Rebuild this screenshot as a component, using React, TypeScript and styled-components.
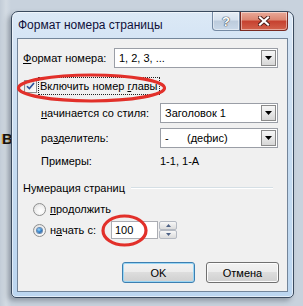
import React from 'react';
import styled, { createGlobalStyle } from 'styled-components';

const Global = createGlobalStyle`
  html, body { margin: 0; padding: 0; }
  body {
    width: 303px;
    height: 306px;
    overflow: hidden;
    background: #c8d2dd;
    font-family: "Liberation Sans", Arial, sans-serif;
  }
`;

const Page = styled.div`
  position: relative;
  width: 303px;
  height: 306px;
  box-sizing: border-box;
  padding: 11px 9px 8px 11px;
  background: linear-gradient(90deg, #c2ccd7 0px, #d3dbe3 6px, #c8d2dd 11px, #c8d2dd 100%);
`;

const BackLetter = styled.span`
  position: absolute;
  left: 2px;
  top: 130px;
  font: bold 15px "Liberation Sans", Arial, sans-serif;
  color: #111;
  text-shadow: -1px 0 0 #d9a640;
`;

const Window = styled.div`
  position: relative;
  width: 283px;
  height: 287px;
  box-sizing: border-box;
  border: 1px solid #3a4a5e;
  border-radius: 7px 7px 5px 5px;
  background: linear-gradient(180deg, #dce9f6 0%, #d3e3f4 12%, #c4dbf1 60%, #bcd6f0 100%);
  box-shadow: inset 0 0 0 1px rgba(255, 255, 255, 0.55), -3px 3px 5px rgba(40, 50, 60, 0.35);
  display: flex;
  flex-direction: column;
`;

const TitleBar = styled.div`
  height: 26px;
  display: flex;
  align-items: center;
  padding-left: 6px;
  font-size: 12px;
  color: #10103a;
`;

const CaptionButtons = styled.div`
  position: absolute;
  top: 0;
  right: 5px;
  display: flex;
`;

const CapButton = styled.div<{ $variant: 'help' | 'close' }>`
  box-sizing: border-box;
  height: 19px;
  width: ${(p) => (p.$variant === 'help' ? '28px' : '48px')};
  display: flex;
  align-items: center;
  justify-content: center;
  border: 1px solid ${(p) => (p.$variant === 'help' ? '#7489a3' : '#7a2a22')};
  border-top: none;
  border-radius: ${(p) => (p.$variant === 'help' ? '0 0 0 4px' : '0 0 4px 0')};
  background: ${(p) =>
    p.$variant === 'help'
      ? 'linear-gradient(180deg, #e6edf5 0%, #d6e1ee 45%, #bccbdc 50%, #c9d8e8 100%)'
      : 'linear-gradient(180deg, #e9a998 0%, #dc8671 45%, #c6402f 50%, #d2624c 100%)'};
  box-shadow: inset 0 0 0 1px rgba(255, 255, 255, 0.45);
`;

const HelpGlyph = styled.span`
  font: bold 13px "Liberation Sans", Arial, sans-serif;
  color: #ffffff;
  text-shadow: 0 0 1px #3c4858, 0 0 1px #3c4858, 0 0 1px #3c4858;
  line-height: 1;
`;

const Client = styled.div`
  margin: 0 5px 5px;
  height: 254px;
  box-sizing: border-box;
  border: 1px solid #73859a;
  background: #f0f0f0;
  display: flex;
  flex-direction: column;
  padding: 9px 9px 8px 5px;
  font-size: 11px;
  color: #000;
`;

const FieldRow = styled.div<{ $indent?: boolean; $top: number }>`
  display: grid;
  grid-template-columns: ${(p) => (p.$indent ? '119px 118px' : '91px 164px')};
  align-items: center;
  padding-left: ${(p) => (p.$indent ? '18px' : '0')};
  margin-top: ${(p) => p.$top}px;
  height: ${(p) => (p.$indent ? '20px' : '20px')};
`;

const TextRow = styled.div<{ $top: number }>`
  display: grid;
  grid-template-columns: 119px auto;
  align-items: center;
  padding-left: 18px;
  margin-top: ${(p) => p.$top}px;
  height: 16px;
`;

const Label = styled.span`
  white-space: nowrap;
`;

const U = styled.span`
  text-decoration: underline;
  text-underline-offset: 1px;
`;

const Combo = styled.div`
  box-sizing: border-box;
  height: 20px;
  border: 1px solid #9a9ea6;
  background: #fff;
  display: flex;
  align-items: stretch;
  padding: 1px;
`;

const ComboText = styled.span<{ $gap?: boolean }>`
  flex: 1;
  display: flex;
  align-items: center;
  padding-left: 3px;
  white-space: pre;
`;

const DropButton = styled.div`
  box-sizing: border-box;
  width: 15px;
  border: 1px solid #8a8a8a;
  background: linear-gradient(180deg, #f6f6f6 0%, #e8e8e8 50%, #d6d6d6 100%);
  display: flex;
  align-items: center;
  justify-content: center;
`;

const CheckRow = styled.div`
  display: flex;
  align-items: center;
  margin-top: 10px;
  height: 16px;
  padding-left: 1px;
`;

const Box = styled.div`
  box-sizing: border-box;
  width: 13px;
  height: 13px;
  border: 1px solid #8e8f8f;
  background: linear-gradient(135deg, #dcdcdc 0%, #f2f2f2 60%, #ffffff 100%);
  display: flex;
  align-items: center;
  justify-content: center;
`;

const FocusText = styled.span`
  margin-left: 2px;
  padding: 1px 1px 1px 1px;
  outline: 1px dotted #222;
  outline-offset: 0;
  line-height: 14px;
`;

const GroupHeader = styled.div`
  display: flex;
  align-items: center;
  margin-top: 12px;
  height: 14px;
  gap: 6px;
  padding-right: 5px;
`;

const GroupLine = styled.div`
  flex: 1;
  height: 1px;
  background: #d5dfe5;
  border-bottom: 1px solid #ffffff;
`;

const RadioRow = styled.div<{ $top: number; $h: number }>`
  display: flex;
  align-items: center;
  margin-top: ${(p) => p.$top}px;
  height: ${(p) => p.$h}px;
  padding-left: 10px;
`;

const Radio = styled.div<{ $on?: boolean }>`
  box-sizing: border-box;
  width: 13px;
  height: 13px;
  border-radius: 50%;
  border: 1px solid #8e8f8f;
  background: radial-gradient(circle at 60% 65%, #ffffff 0%, #f2f2f2 45%, #d6d6d6 100%);
  display: flex;
  align-items: center;
  justify-content: center;
  &::after {
    content: '';
    display: ${(p) => (p.$on ? 'block' : 'none')};
    width: 5px;
    height: 5px;
    border-radius: 50%;
    background: radial-gradient(circle at 40% 35%, #a9dcfa 0%, #3b8bd2 45%, #0e3e7c 100%);
    box-shadow: 0 0 0 1px #6a8ab0;
  }
`;

const RadioLabel = styled.span<{ $w?: number }>`
  margin-left: 4px;
  width: ${(p) => (p.$w ? `${p.$w}px` : 'auto')};
  white-space: nowrap;
`;

const Spin = styled.div`
  display: flex;
  height: 18px;
`;

const SpinInput = styled.div`
  box-sizing: border-box;
  width: 47px;
  border: 1px solid #abadb3;
  background: #fff;
  display: flex;
  align-items: center;
  padding-left: 3px;
`;

const SpinButtons = styled.div`
  display: flex;
  flex-direction: column;
  width: 18px;
  margin-left: 1px;
  gap: 0px;
`;

const SpinBtn = styled.div`
  flex: 1;
  box-sizing: border-box;
  border: 1px solid #b4b9c2;
  border-radius: 2px;
  background: linear-gradient(180deg, #f7f7f7 0%, #e9e9e9 50%, #dcdcdc 100%);
  display: flex;
  align-items: center;
  justify-content: center;
`;

const ButtonBar = styled.div`
  display: flex;
  justify-content: flex-end;
  gap: 11px;
  margin-top: 23px;
  padding-right: 0;
  margin-right: -1px;
`;

const PushButton = styled.div<{ $default?: boolean }>`
  box-sizing: border-box;
  width: 73px;
  height: 21px;
  border: 1px solid ${(p) => (p.$default ? '#3c7fb1' : '#707070')};
  border-radius: 3px;
  background: linear-gradient(180deg, #f2f2f2 0%, #ebebeb 49%, #dddddd 50%, #cfcfcf 100%);
  box-shadow: inset 0 0 0 1px ${(p) => (p.$default ? '#9ad6f4' : '#fcfcfc')};
  display: flex;
  align-items: center;
  justify-content: center;
  font-size: 11px;
`;

const Overlay = styled.svg`
  position: absolute;
  left: 0;
  top: 0;
  pointer-events: none;
`;

const Arrow = () => (
  <svg width="7" height="4" viewBox="0 0 7 4">
    <path d="M0 0h7L3.5 4z" fill="#000" />
  </svg>
);

const SmallArrow = ({ up }: { up?: boolean }) => (
  <svg width="5" height="3" viewBox="0 0 5 3">
    <path d={up ? 'M0 3h5L2.5 0z' : 'M0 0h5L2.5 3z'} fill="#4d6185" />
  </svg>
);

export default function App() {
  return (
    <>
      <Global />
      <Page>
        <BackLetter>В</BackLetter>
        <Window>
          <TitleBar>Формат номера страницы</TitleBar>
          <CaptionButtons>
            <CapButton $variant="help">
              <HelpGlyph>?</HelpGlyph>
            </CapButton>
            <CapButton $variant="close">
              <svg width="12" height="10" viewBox="0 0 12 10">
                <path d="M2 1.5L10 8.5M10 1.5L2 8.5" stroke="#4a1c18" strokeWidth="4" strokeLinecap="square" />
                <path d="M2 1.5L10 8.5M10 1.5L2 8.5" stroke="#ffffff" strokeWidth="2.2" strokeLinecap="square" />
              </svg>
            </CapButton>
          </CaptionButtons>
          <Client>
            <FieldRow $top={0}>
              <Label>
                <U>Ф</U>ормат номера:
              </Label>
              <Combo>
                <ComboText>1, 2, 3, ...</ComboText>
                <DropButton>
                  <Arrow />
                </DropButton>
              </Combo>
            </FieldRow>
            <CheckRow>
              <Box>
                <svg width="9" height="8" viewBox="0 0 9 8">
                  <path d="M1 4.2L3.4 6.6L8 1" fill="none" stroke="#2a4f9a" strokeWidth="1.6" />
                </svg>
              </Box>
              <FocusText>
                Включить номер <U>г</U>лавы
              </FocusText>
            </CheckRow>
            <FieldRow $indent $top={9}>
              <Label>
                <U>н</U>ачинается со стиля:
              </Label>
              <Combo>
                <ComboText>Заголовок 1</ComboText>
                <DropButton>
                  <Arrow />
                </DropButton>
              </Combo>
            </FieldRow>
            <FieldRow $indent $top={5}>
              <Label>
                ра<U>з</U>делитель:
              </Label>
              <Combo>
                <ComboText>{'-      (дефис)'}</ComboText>
                <DropButton>
                  <Arrow />
                </DropButton>
              </Combo>
            </FieldRow>
            <TextRow $top={5}>
              <Label>Примеры:</Label>
              <Label>1-1, 1-А</Label>
            </TextRow>
            <GroupHeader>
              <Label>Нумерация страниц</Label>
              <GroupLine />
            </GroupHeader>
            <RadioRow $top={6} $h={16}>
              <Radio />
              <RadioLabel>
                <U>п</U>родолжить
              </RadioLabel>
            </RadioRow>
            <RadioRow $top={4} $h={18}>
              <Radio $on />
              <RadioLabel $w={61}>
                н<U>а</U>чать с:
              </RadioLabel>
              <Spin>
                <SpinInput>100</SpinInput>
                <SpinButtons>
                  <SpinBtn>
                    <SmallArrow up />
                  </SpinBtn>
                  <SpinBtn>
                    <SmallArrow />
                  </SpinBtn>
                </SpinButtons>
              </Spin>
            </RadioRow>
            <ButtonBar>
              <PushButton $default>OK</PushButton>
              <PushButton>Отмена</PushButton>
            </ButtonBar>
          </Client>
        </Window>
        <Overlay width="303" height="306" viewBox="0 0 303 306">
          <ellipse cx="91.5" cy="88" rx="73" ry="13" fill="none" stroke="#e2302a" strokeWidth="3.2" />
          <ellipse cx="124.5" cy="230.5" rx="21.5" ry="14.5" fill="none" stroke="#e2302a" strokeWidth="3.2" />
        </Overlay>
      </Page>
    </>
  );
}
